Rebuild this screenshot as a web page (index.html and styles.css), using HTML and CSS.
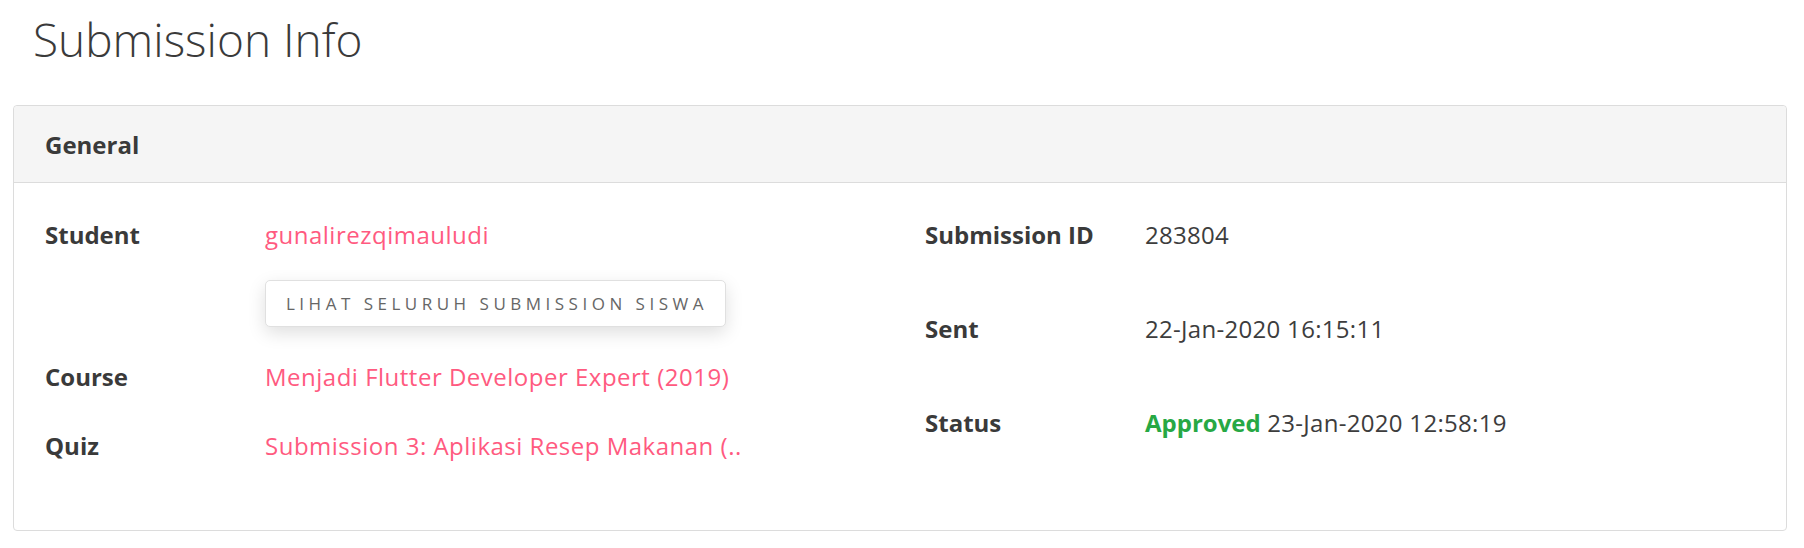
FILE: index.html
```html
<!DOCTYPE html>
<html lang="id">
<head>
<meta charset="utf-8">
<title>Submission Info</title>
<link rel="stylesheet" href="styles.css">
</head>
<body>
<div class="page">
  <h1 class="page-title">Submission Info</h1>
  <section class="panel">
    <header class="panel-header">General</header>
    <div class="panel-body">
      <div class="info-col info-col-left">
        <div class="info-row row-student">
          <div class="info-label">Student</div>
          <div class="info-value">
            <a class="link" href="#">gunalirezqimauludi</a>
            <button class="btn-outline" type="button">LIHAT SELURUH SUBMISSION SISWA</button>
          </div>
        </div>
        <div class="info-row row-course">
          <div class="info-label">Course</div>
          <div class="info-value"><a class="link" href="#">Menjadi Flutter Developer Expert (2019)</a></div>
        </div>
        <div class="info-row row-quiz">
          <div class="info-label">Quiz</div>
          <div class="info-value"><a class="link" href="#">Submission 3: Aplikasi Resep Makanan (..</a></div>
        </div>
      </div>
      <div class="info-col info-col-right">
        <div class="info-row row-right">
          <div class="info-label">Submission ID</div>
          <div class="info-value">283804</div>
        </div>
        <div class="info-row row-right">
          <div class="info-label">Sent</div>
          <div class="info-value">22-Jan-2020 16:15:11</div>
        </div>
        <div class="info-row row-right">
          <div class="info-label">Status</div>
          <div class="info-value"><span class="status-approved">Approved</span> 23-Jan-2020 12:58:19</div>
        </div>
      </div>
    </div>
  </section>
</div>
</body>
</html>
```

FILE: styles.css
```css
* { box-sizing: border-box; }

html, body {
  margin: 0;
  padding: 0;
  background: #ffffff;
}

body {
  font-family: "Open Sans", "Noto Sans", "Lato", sans-serif;
  font-size: 24px;
  color: #3d3d3d;
}

.page {
  padding: 12px 17px 0 13px;
}

.page-title {
  margin: 0 0 38px 0;
  padding-left: 20px;
  font-size: 46px;
  line-height: 55px;
  font-weight: 300;
  color: #3a3a3a;
}

.panel {
  border: 1px solid #dcdcdc;
  border-radius: 4px;
  background: #fff;
}

.panel-header {
  background: #f5f5f5;
  border-bottom: 1px solid #dcdcdc;
  border-radius: 4px 4px 0 0;
  height: 77px;
  padding: 0 31px;
  display: flex;
  align-items: center;
  font-weight: 700;
  font-size: 24px;
  color: #3a3a3a;
}

.panel-body {
  display: grid;
  grid-template-columns: 880px 1fr;
  padding: 36px 31px 0 31px;
  min-height: 347px;
}

.info-row {
  display: grid;
  grid-template-columns: 220px 1fr;
  line-height: 32px;
}

.info-label {
  font-weight: 700;
  color: #3a3a3a;
}

.info-value {
  color: #3d3d3d;
  letter-spacing: 0.3px;
}

.link {
  color: #ff5a80;
  text-decoration: none;
  letter-spacing: 0.5px;
}

.row-student { margin-bottom: 34px; }
.row-course { margin-bottom: 37px; }

.row-right { margin-bottom: 62px; }

.btn-outline {
  display: block;
  margin-top: 29px;
  height: 47px;
  padding: 0 17px 0 20px;
  background: #fff;
  border: 1px solid #e0e0e0;
  border-radius: 5px;
  box-shadow: 0 6px 18px rgba(0, 0, 0, 0.13);
  font-family: "Open Sans", "Noto Sans", sans-serif;
  font-size: 17px;
  letter-spacing: 4.5px;
  color: #666;
  cursor: pointer;
}

.status-approved {
  color: #27a844;
  font-weight: 700;
  letter-spacing: 0;
}
```
